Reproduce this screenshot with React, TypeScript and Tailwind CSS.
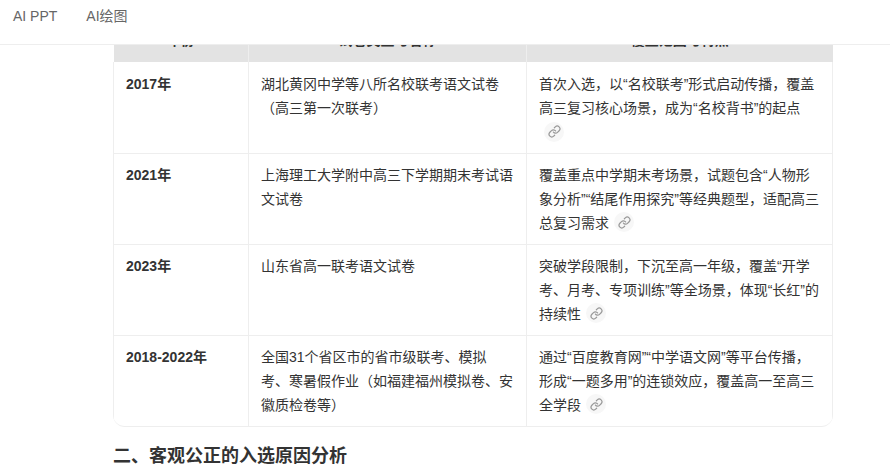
import { Link } from "lucide-react";

const rows = [
  {
    year: "2017年",
    paper: "湖北黄冈中学等八所名校联考语文试卷（高三第一次联考）",
    scope: "首次入选，以“名校联考”形式启动传播，覆盖高三复习核心场景，成为“名校背书”的起点",
  },
  {
    year: "2021年",
    paper: "上海理工大学附中高三下学期期末考试语文试卷",
    scope: "覆盖重点中学期末考场景，试题包含“人物形象分析”“结尾作用探究”等经典题型，适配高三总复习需求",
  },
  {
    year: "2023年",
    paper: "山东省高一联考语文试卷",
    scope: "突破学段限制，下沉至高一年级，覆盖“开学考、月考、专项训练”等全场景，体现“长红”的持续性",
  },
  {
    year: "2018-2022年",
    paper: "全国31个省区市的省市级联考、模拟考、寒暑假作业（如福建福州模拟卷、安徽质检卷等）",
    scope: "通过“百度教育网”“中学语文网”等平台传播，形成“一题多用”的连锁效应，覆盖高一至高三全学段",
  },
];

const CiteIcon = () => (
  <span className="ml-[5px] inline-flex h-5 w-5 items-center justify-center rounded-full bg-[#f7f7f7] align-[-1px]">
    <Link className="h-[13px] w-[13px] text-[#999]" strokeWidth={2.25} />
  </span>
);

export default function App() {
  return (
    <div className="h-[469px] w-[890px] overflow-hidden bg-white font-['Liberation_Sans','Noto_Sans_CJK_SC',sans-serif] text-sm text-[#333]">
      <nav className="relative z-10 flex h-[45px] items-center gap-[29px] border-b border-[#eeeeee] bg-white pb-[13px] pl-[13px] text-[#666]">
        <span>AI PPT</span>
        <span>AI绘图</span>
      </nav>

      <div className="-mt-[27px] ml-[113px] w-[720px]">
        <div className="overflow-hidden rounded-b-xl border-b border-[#eeeeee]">
          <table className="w-full table-fixed border-collapse leading-6">
            <colgroup>
              <col className="w-[135px]" />
              <col className="w-[278px]" />
              <col />
            </colgroup>
            <thead>
              <tr className="h-[44px] bg-[#e3e3e3] text-center font-semibold">
                <th className="border-r border-[#eeeeee] pb-px font-semibold">年份</th>
                <th className="border-r border-[#eeeeee] pb-px font-semibold">试卷类型与名称</th>
                <th className="pb-px font-semibold">覆盖范围与特点</th>
              </tr>
            </thead>
            <tbody>
              {rows.map((row, i) => {
                const pad = i === 0 ? "pt-[10px]" : "pt-[9px]";
                return (
                  <tr key={row.year} className={i < rows.length - 1 ? "h-[91px] border-b border-[#eeeeee]" : "h-[91px]"}>
                    <td className={`border-x border-[#eeeeee] px-3 pb-2 align-top font-bold ${pad}`}>{row.year}</td>
                    <td className={`border-r border-[#eeeeee] px-3 pb-2 align-top ${pad}`}>{row.paper}</td>
                    <td className={`border-r border-[#eeeeee] px-3 pb-2 align-top ${pad}`}>
                      {row.scope}
                      <CiteIcon />
                    </td>
                  </tr>
                );
              })}
            </tbody>
          </table>
        </div>
        <h2 className="mt-[17px] text-lg leading-6 font-bold text-[#333]">二、客观公正的入选原因分析</h2>
      </div>
    </div>
  );
}
